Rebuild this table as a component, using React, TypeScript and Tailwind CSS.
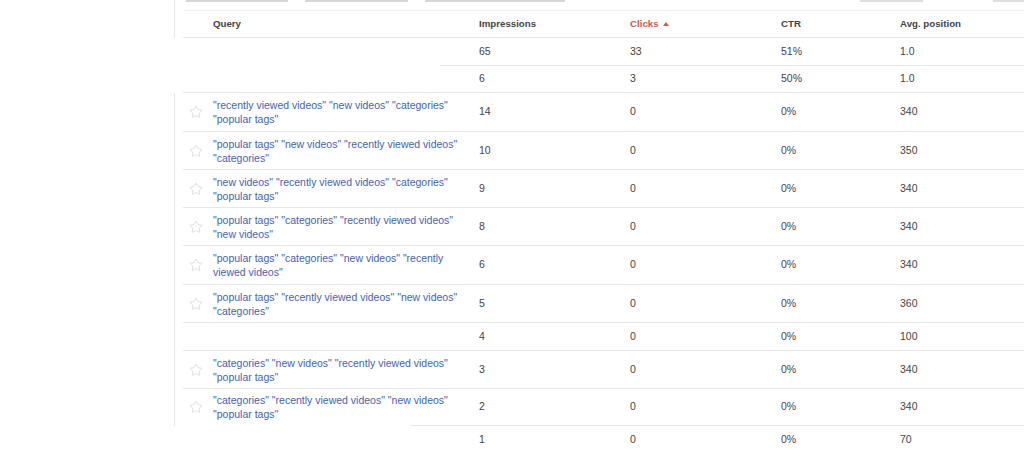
import { Star } from 'lucide-react';

interface Row {
  id: string;
  query?: [string, string];
  impressions: string;
  clicks: string;
  ctr: string;
  position: string;
  height: string;
  rule: string;
  edge: boolean;
}

const rows: Row[] = [
  { id: 'r1', impressions: '65', clicks: '33', ctr: '51%', position: '1.0', height: 'h-[27px]', rule: 'ml-[257px]', edge: false },
  { id: 'r2', impressions: '6', clicks: '3', ctr: '50%', position: '1.0', height: 'h-[26px]', rule: 'ml-0', edge: false },
  { id: 'r3', query: ['"recently viewed videos" "new videos" "categories"', '"popular tags"'], impressions: '14', clicks: '0', ctr: '0%', position: '340', height: 'h-[38px]', rule: 'ml-0', edge: true },
  { id: 'r4', query: ['"popular tags" "new videos" "recently viewed videos"', '"categories"'], impressions: '10', clicks: '0', ctr: '0%', position: '350', height: 'h-[37px]', rule: 'ml-0', edge: true },
  { id: 'r5', query: ['"new videos" "recently viewed videos" "categories"', '"popular tags"'], impressions: '9', clicks: '0', ctr: '0%', position: '340', height: 'h-[37px]', rule: 'ml-0', edge: true },
  { id: 'r6', query: ['"popular tags" "categories" "recently viewed videos"', '"new videos"'], impressions: '8', clicks: '0', ctr: '0%', position: '340', height: 'h-[37px]', rule: 'ml-0', edge: true },
  { id: 'r7', query: ['"popular tags" "categories" "new videos" "recently', 'viewed videos"'], impressions: '6', clicks: '0', ctr: '0%', position: '340', height: 'h-[38px]', rule: 'ml-0', edge: true },
  { id: 'r8', query: ['"popular tags" "recently viewed videos" "new videos"', '"categories"'], impressions: '5', clicks: '0', ctr: '0%', position: '360', height: 'h-[37px]', rule: 'ml-0', edge: true },
  { id: 'r9', impressions: '4', clicks: '0', ctr: '0%', position: '100', height: 'h-[27px]', rule: 'ml-0', edge: true },
  { id: 'r10', query: ['"categories" "new videos" "recently viewed videos"', '"popular tags"'], impressions: '3', clicks: '0', ctr: '0%', position: '340', height: 'h-[37px]', rule: 'ml-0', edge: true },
  { id: 'r11', query: ['"categories" "recently viewed videos" "new videos"', '"popular tags"'], impressions: '2', clicks: '0', ctr: '0%', position: '340', height: 'h-[36px]', rule: 'ml-[227px]', edge: true },
  { id: 'r12', impressions: '1', clicks: '0', ctr: '0%', position: '70', height: 'h-[27px]', rule: 'ml-0', edge: false },
];

const App = () => {
  return (
    <div className="w-[1024px] h-[450px] overflow-hidden bg-white font-[Liberation_Sans,Arial,sans-serif] text-[#444]">
      <div className="ml-[174px]">
        {/* Toolbar (scrolled off) */}
        <div className="flex h-[10px]">
          <div className="w-[9px] border-l border-[#e6e6e6]" />
          <div className="flex flex-1 items-start">
            <div className="ml-[3px] w-[102px] h-[2px] bg-[#d6d6d6]" />
            <div className="ml-[17px] w-[103px] h-[2px] bg-[#d6d6d6]" />
            <div className="ml-[17px] w-[140px] h-[2px] bg-[#d6d6d6]" />
            <div className="ml-[295px] w-[63px] h-[2px] bg-[#dedede]" />
            <div className="ml-[70px] flex-1 h-[2px] bg-[#dedede]" />
          </div>
        </div>

        {/* Header */}
        <div className="flex">
          <div className="w-[9px] border-l border-[#e6e6e6]" />
          <div className="flex flex-1 flex-col">
            <div className="h-px bg-[#f0f0f0]" />
            <div className="flex h-[26px] items-center text-[9.7px] font-bold text-[#444]">
              <div className="w-[30px]" />
              <div className="w-[266px]">Query</div>
              <div className="w-[151px]">Impressions</div>
              <div className="w-[151px] flex items-center gap-[4px] text-[#d0574a]">
                Clicks
                <svg width="6" height="4" viewBox="0 0 6 4">
                  <path d="M0 4 L3 0 L6 4 Z" fill="#d0574a" />
                </svg>
              </div>
              <div className="w-[119px]">CTR</div>
              <div className="flex-1">Avg. position</div>
            </div>
            <div className="h-px bg-[#e8e8e8]" />
          </div>
        </div>

        {/* Body */}
        {rows.map((row) => (
          <div key={row.id} className="flex">
            <div className={`w-[9px] ${row.edge ? 'border-l border-[#e6e6e6]' : ''}`} />
            <div className="flex flex-1 flex-col">
              <div className={`flex ${row.height} items-center text-[10.5px] text-[#444]`}>
                <div className="w-[30px] pl-[6px] flex items-center">
                  {row.query && <Star size={14} strokeWidth={1} className="text-[#c8c8c8]" />}
                </div>
                <div className="w-[266px] leading-[14px] text-[#4563a8]">
                  {row.query && (
                    <>
                      <div>{row.query[0]}</div>
                      <div>{row.query[1]}</div>
                    </>
                  )}
                </div>
                <div className="w-[151px]">{row.impressions}</div>
                <div className="w-[151px]">{row.clicks}</div>
                <div className="w-[119px]">{row.ctr}</div>
                <div className="flex-1">{row.position}</div>
              </div>
              <div className={`h-px bg-[#e8e8e8] ${row.rule}`} />
            </div>
          </div>
        ))}
      </div>
    </div>
  );
};

export default App;
